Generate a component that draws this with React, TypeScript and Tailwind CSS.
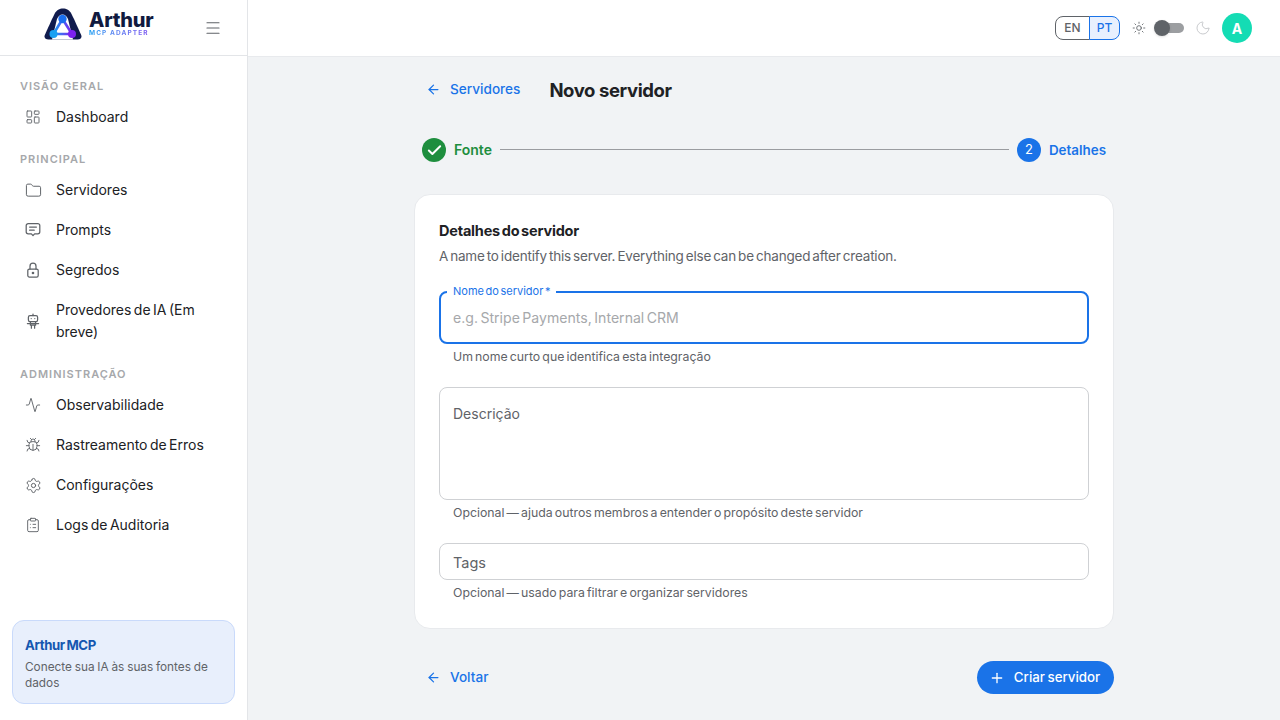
import {
  Activity,
  ArrowLeft,
  Bug,
  Check,
  ClipboardList,
  Folder,
  LayoutDashboard,
  type LucideIcon,
  Menu,
  Moon,
  Plus,
  Settings,
  Sun,
} from "lucide-react";
import type { ReactNode } from "react";

const font = "font-['Inter','Noto_Sans',sans-serif]";

function Glyph({ children }: { children: ReactNode }) {
  return (
    <svg width="16" height="16" viewBox="0 0 16 16" fill="none" stroke="#5f6368" strokeWidth="1.25" strokeLinecap="round" strokeLinejoin="round">
      {children}
    </svg>
  );
}

function PromptIcon() {
  return (
    <Glyph>
      <path d="M3.2 1.6h9.6a2 2 0 0 1 2 2v6.2a2 2 0 0 1-2 2H9.6L8 13.6l-1.6-1.8H3.2a2 2 0 0 1-2-2V3.6a2 2 0 0 1 2-2Z" />
      <path d="M4.6 5h6.8M4.6 8.2h4.6" />
    </Glyph>
  );
}

function LockIcon() {
  return (
    <Glyph>
      <rect x="2.8" y="7" width="10.4" height="8" rx="1.6" />
      <path d="M5 7V4.2a3 3 0 0 1 6 0V7" />
      <circle cx="8" cy="11" r="0.7" fill="#5f6368" />
    </Glyph>
  );
}

function BotIcon() {
  return (
    <Glyph>
      <path d="M8 1v1.6" />
      <rect x="3.4" y="2.6" width="9.2" height="6" rx="1.6" />
      <path d="M6.2 5.6v.01M9.8 5.6v.01" />
      <path d="M2.4 10.6h11.2M5.4 8.6v3.6h5.2V8.6M6.4 12.2v3M9.6 12.2v3" />
    </Glyph>
  );
}

function Logo() {
  return (
    <div className="flex items-start gap-[7px] h-[32px] -mt-[8px]">
      <svg width="38" height="32" viewBox="0 0 38 32" fill="none">
        <defs>
          <linearGradient id="tri" x1="9" y1="26" x2="28" y2="26" gradientUnits="userSpaceOnUse">
            <stop offset="0" stopColor="#18a0f2" />
            <stop offset="1" stopColor="#7c22f0" />
          </linearGradient>
        </defs>
        <path d="M0.8 27C3 22 7.5 12 10.5 6C12.5 2 15.5 0.5 19 0.5C22.5 0.5 25.5 2 27.5 6C30.5 12 35 22 37.2 27C38.2 29.5 36.5 31.5 33.5 31.5H4.5C1.5 31.5 -0.2 29.5 0.8 27Z" fill="#101b4d" />
        <path d="M18.5 6.5C16 6.5 14.5 8 13 11L8 31.6H29L24 11C22.5 8 21 6.5 18.5 6.5Z" fill="#fff" />
        <path d="M18.5 11L9.5 26H28Z" stroke="url(#tri)" strokeWidth="2.6" strokeLinejoin="round" />
        <circle cx="18.5" cy="11" r="4.2" fill="#1a6ff0" />
        <circle cx="9.5" cy="26" r="4" fill="#18a0f2" />
        <circle cx="28" cy="26" r="4" fill="#7c22f0" />
      </svg>
      <div className="flex flex-col pt-[4px]">
        <span className="text-[20px] leading-[16px] font-extrabold tracking-[-0.2px] text-[#111a3f] font-['Inter',sans-serif]">Arthur</span>
        <span className="mt-[1px] text-[6.5px] leading-[8px] font-bold tracking-[1.1px] text-transparent bg-clip-text bg-gradient-to-r from-[#18a0f2] to-[#7c4cf0] font-['Inter',sans-serif]">
          MCP ADAPTER
        </span>
      </div>
    </div>
  );
}

function SectionLabel({ children }: { children: string }) {
  return (
    <div className="h-4 mb-[3px] pl-[20px] text-[11px] leading-4 font-semibold tracking-[1px] text-[#a6a8ab]">
      {children}
    </div>
  );
}

function NavItem({ icon: Icon, glyph, label, size = 16 }: { icon?: LucideIcon; glyph?: ReactNode; label: string; size?: number }) {
  return (
    <div className="flex items-center gap-[15px] pl-[25px] pr-[24px] py-[9px] text-[14px] leading-[22px] text-[#202124] [word-spacing:-1.5px]">
      <span className="shrink-0 w-4 flex justify-center">
        {glyph ?? (Icon ? <Icon size={size} strokeWidth={1.4} color="#5f6368" className="shrink-0" /> : null)}
      </span>
      <span>{label}</span>
    </div>
  );
}

function Sidebar() {
  return (
    <aside className="w-[248px] shrink-0 h-full flex flex-col bg-white border-r border-[#e3e5e8]">
      <div className="h-[56px] shrink-0 flex items-center border-b border-[#e3e5e8] pl-[44px] pr-[25px] justify-between">
        <Logo />
        <Menu size={18} strokeWidth={1.6} color="#5f6368" />
      </div>
      <nav className="flex-1 pt-[8px]">
        <div className="pt-[14px]">
          <SectionLabel>VISÃO GERAL</SectionLabel>
          <NavItem icon={LayoutDashboard} label="Dashboard" />
        </div>
        <div className="pt-[14px]">
          <SectionLabel>PRINCIPAL</SectionLabel>
          <NavItem icon={Folder} size={17} label="Servidores" />
          <NavItem glyph={<PromptIcon />} label="Prompts" />
          <NavItem glyph={<LockIcon />} label="Segredos" />
          <NavItem glyph={<BotIcon />} label="Provedores de IA (Em breve)" />
        </div>
        <div className="pt-[14px]">
          <SectionLabel>ADMINISTRAÇÃO</SectionLabel>
          <NavItem icon={Activity} label="Observabilidade" />
          <NavItem icon={Bug} label="Rastreamento de Erros" />
          <NavItem icon={Settings} size={17} label="Configurações" />
          <NavItem icon={ClipboardList} label="Logs de Auditoria" />
        </div>
      </nav>
      <div className="mx-[12px] mb-[16px] h-[84px] rounded-[12px] border border-[#c9dafb] bg-[#e8effc] px-[12px] pt-[14px]">
        <div className="text-[13.2px] leading-[20px] font-bold tracking-[-0.4px] text-[#1557b0] [word-spacing:-1px]">Arthur MCP</div>
        <div className="mt-[4px] text-[11.8px] leading-[16px] text-[#5f6368] [word-spacing:-0.5px]">Conecte sua IA às suas fontes de dados</div>
      </div>
    </aside>
  );
}

function Topbar() {
  return (
    <header className="h-[57px] shrink-0 bg-white border-b border-[#e8eaed] flex items-center justify-end pr-[28px]">
      <div className="flex h-[24px] text-[12px] font-medium font-['Inter',sans-serif]">
        <div className="w-[35px] flex items-center justify-center rounded-l-[8px] border border-[#5f6368] text-[#5f6368]">EN</div>
        <div className="w-[31px] -ml-[1px] flex items-center justify-center rounded-r-[8px] border border-[#1a73e8] bg-[#e8f0fe] text-[#1a73e8]">PT</div>
      </div>
      <Sun size={14} strokeWidth={1.5} color="#5f6368" className="ml-[12px]" />
      <div className="relative ml-[9px] h-[10px] w-[29px] rounded-full bg-[#9c9ea1]">
        <div className="absolute -left-[1px] -top-[3px] h-[16px] w-[16px] rounded-full bg-[#5f6368] shadow-sm" />
      </div>
      <Moon size={16} strokeWidth={1.5} color="#c9cbce" className="ml-[11px]" />
      <div className="ml-[11px] h-[30px] w-[30px] rounded-full bg-[#14dcb4] flex items-center justify-center text-white text-[14px] font-bold font-['Inter',sans-serif]">A</div>
    </header>
  );
}

function Stepper() {
  return (
    <div className="mt-[33px] h-[24px] flex items-center px-[8px]">
      <div className="w-[24px] h-[24px] rounded-full bg-[#1e8e3e] flex items-center justify-center">
        <Check size={17} strokeWidth={2.8} color="#fff" />
      </div>
      <span className="ml-[8px] -mt-[1px] text-[14px] font-semibold text-[#1e8e3e]">Fonte</span>
      <div className="mx-[8px] -mt-[1px] flex-1 h-px bg-[#9a9ca0]" />
      <div className="w-[24px] h-[24px] rounded-full bg-[#1a73e8] flex items-center justify-center text-white text-[13px]">2</div>
      <span className="ml-[8px] text-[13.4px] font-semibold text-[#1a73e8]">Detalhes</span>
    </div>
  );
}

function Helper({ children }: { children: string }) {
  return <div className="mt-[4px] pl-[14px] text-[12.3px] leading-[18px] text-[#5f6368] [word-spacing:-1.3px]">{children}</div>;
}

function Card() {
  return (
    <section className="mt-[32px] h-[435px] rounded-[16px] border border-[#e8eaed] bg-white px-[24px] pt-[26px]">
      <h2 className="text-[14.5px] leading-[20px] font-bold tracking-[-0.2px] text-[#202124] [word-spacing:-1.5px]">Detalhes do servidor</h2>
      <p className="mt-[5px] text-[13.5px] leading-[20px] text-[#5f6368] tracking-[-0.2px] [word-spacing:-1.5px]">A name to identify this server. Everything else can be changed after creation.</p>

      <div className="relative mt-[25px] h-[53px] rounded-[8px] border-2 border-[#1a73e8] flex items-center pl-[12px] text-[14.1px] text-[#a6a8ab] [word-spacing:-1.5px]">
        <span className="absolute -top-[9px] left-[6px] bg-white px-[6px] text-[11px] leading-[14px] text-[#1a73e8] [word-spacing:-1.5px]">Nome do servidor *</span>
        e.g. Stripe Payments, Internal CRM
      </div>
      <Helper>Um nome curto que identifica esta integração</Helper>

      <div className="mt-[21px] h-[113px] rounded-[8px] border border-[#cfd1d4] pl-[13px] pt-[15px] text-[14px] leading-[22px] text-[#5f6368]">Descrição</div>
      <Helper>Opcional — ajuda outros membros a entender o propósito deste servidor</Helper>

      <div className="mt-[21px] h-[37px] rounded-[8px] border border-[#cfd1d4] flex items-center pl-[13px] pt-[2px] text-[14.5px] text-[#5f6368]">Tags</div>
      <Helper>Opcional — usado para filtrar e organizar servidores</Helper>
    </section>
  );
}

export default function App() {
  return (
    <div className={`${font} flex h-[720px] w-[1280px] overflow-hidden bg-[#f1f3f5]`}>
      <Sidebar />
      <div className="flex-1 flex flex-col min-w-0">
        <Topbar />
        <main className="w-[700px] mx-auto">
          <div className="mt-[16px] h-[32px] flex items-center px-[12px]">
            <ArrowLeft size={15} strokeWidth={2} color="#1a73e8" />
            <span className="ml-[9px] text-[13.6px] font-medium text-[#1a73e8]">Servidores</span>
            <h1 className="ml-[29px] mt-[3px] text-[18.5px] font-bold tracking-[-0.4px] text-[#202124]">Novo servidor</h1>
          </div>
          <Stepper />
          <Card />
          <div className="mt-[32px] h-[33px] flex items-center justify-between">
            <div className="flex items-center pl-[12px]">
              <ArrowLeft size={15} strokeWidth={2} color="#1a73e8" />
              <span className="ml-[9px] text-[13.6px] font-medium text-[#1a73e8]">Voltar</span>
            </div>
            <button className="h-[33px] w-[137px] rounded-full bg-[#1a73e8] flex items-center justify-center gap-[9px] pr-[2px] text-white text-[13.3px] font-medium [word-spacing:-1px]">
              <Plus size={16} strokeWidth={2} />
              Criar servidor
            </button>
          </div>
        </main>
      </div>
    </div>
  );
}
